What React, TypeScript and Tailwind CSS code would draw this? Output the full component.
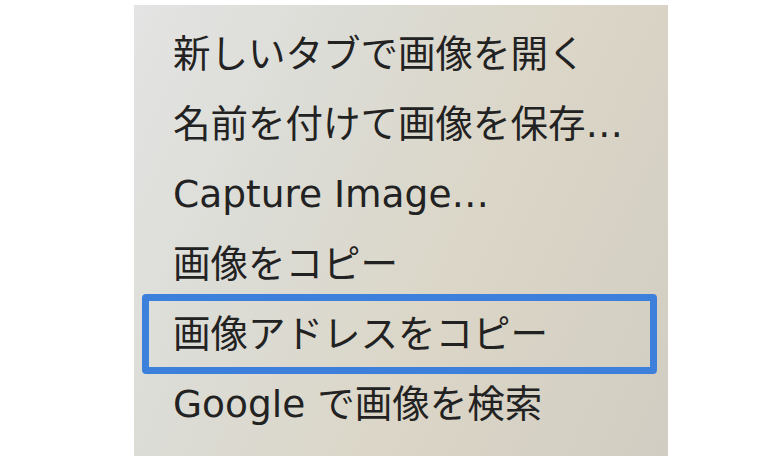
import React from "react";

type MenuItem = { label: string; focused?: boolean };

const ITEMS: MenuItem[] = [
  { label: "新しいタブで画像を開く" },
  { label: "名前を付けて画像を保存…" },
  { label: "Capture Image…" },
  { label: "画像をコピー" },
  { label: "画像アドレスをコピー", focused: true },
  { label: "Google で画像を検索" },
];

export default function App() {
  return (
    <div className="w-[782px] h-[460px] bg-white overflow-hidden">
      <div
        className="ml-[134px] mt-[5px] w-[534px] h-[451px] pt-[15px] flex flex-col bg-[linear-gradient(115deg,#e3e4e3_0%,#dcdcd6_30%,#dbd6c7_60%,#d1cdc2_100%)] text-[#222222]"
        style={{ fontFamily: '"DejaVu Sans", "Noto Sans CJK JP", sans-serif' }}
      >
        {ITEMS.map((item) => (
          <div
            key={item.label}
            className="relative h-[70px] shrink-0 flex items-center pl-[39px] text-[37.5px] leading-none"
          >
            {item.focused && (
              <span className="absolute -top-[6px] -bottom-[4px] left-[8px] right-[11px] border-[7px] border-[#3c80dc] rounded-[4px]" />
            )}
            <span className="relative">{item.label}</span>
          </div>
        ))}
      </div>
    </div>
  );
}
